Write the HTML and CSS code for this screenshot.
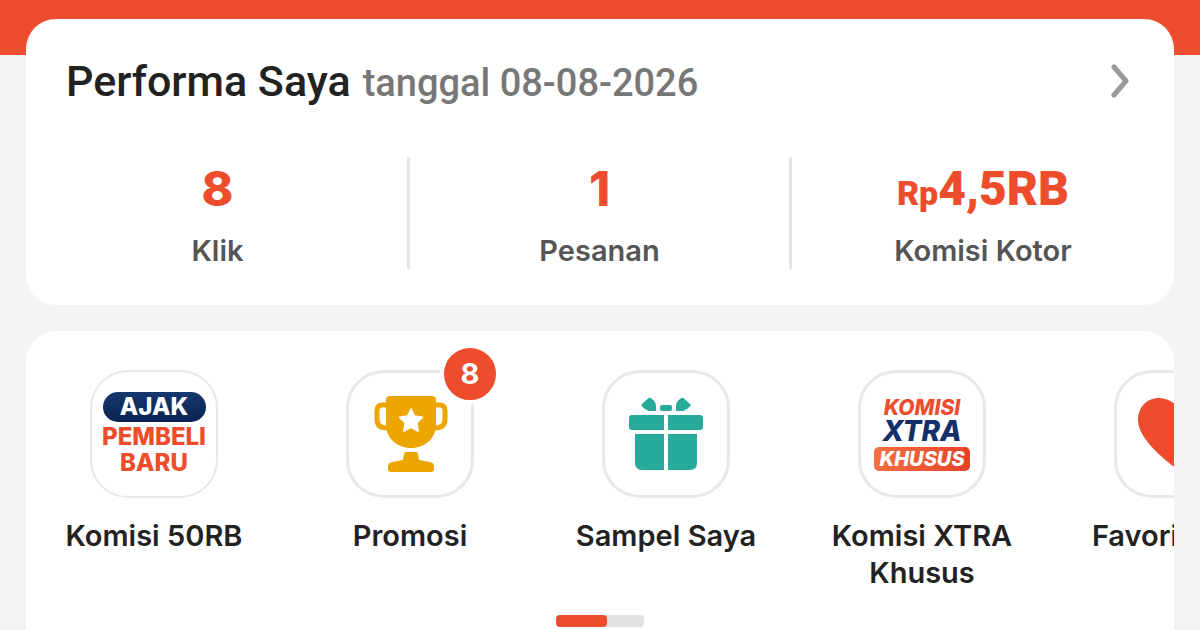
FILE: index.html
```
<!DOCTYPE html>
<html lang="id">
<head>
    <meta charset="UTF-8">
    <meta name="viewport" content="width=device-width, initial-scale=1">
    <title>Performa Saya</title>
    <link rel="stylesheet" href="styles.css">
</head>
<body>
    <main class="page">
        <!-- performance summary -->
        <section class="card performance">
            <a class="performance-head" href="#performa">
                <h1 class="title">Performa Saya</h1>
                <span class="date">tanggal 08-08-2026</span>
                <svg class="chevron" width="20" height="36" viewBox="0 0 20 36" aria-hidden="true">
                    <path d="M4 3 L16 17 L4 31" fill="none" stroke="#999" stroke-width="5" stroke-linecap="round" stroke-linejoin="round"/>
                </svg>
            </a>
            <div class="stats">
                <div class="stat">
                    <span class="value">8</span>
                    <span class="label">Klik</span>
                </div>
                <div class="stat">
                    <span class="value">1</span>
                    <span class="label">Pesanan</span>
                </div>
                <div class="stat">
                    <span class="value money"><span class="currency">Rp</span>4,5RB</span>
                    <span class="label">Komisi Kotor</span>
                </div>
            </div>
        </section>

        <!-- shortcut menu, scrolls sideways -->
        <section class="card shortcuts">
            <nav class="menu">
                <a class="item" href="#komisi">
                    <span class="tile tile-thin">
                        <span class="logo logo-ajak">
                            <span class="pill">AJAK</span>
                            <span>PEMBELI</span>
                            <span>BARU</span>
                        </span>
                    </span>
                    <span class="name">Komisi 50RB</span>
                </a>
                <a class="item" href="#promosi">
                    <span class="tile">
                        <svg width="76" height="80" viewBox="0 0 76 80" aria-hidden="true">
                            <path d="M15 11 H10 Q5 11 5 17 V25 Q5 34 15 34 M63 11 H68 Q73 11 73 17 V25 Q73 34 63 34" fill="none" stroke="#eda500" stroke-width="5"/>
                            <path d="M18 2 H60 Q64 2 64 6 V31 C64 44 53 54 39 54 C25 54 14 44 14 31 V6 Q14 2 18 2 Z" fill="#eda500"/>
                            <path d="M39 15 L42.500 22 L50.500 23.200 L44.800 29 L46.200 37.200 L39 33.300 L31.800 37.200 L33.200 29 L27.500 23.200 L35.500 22 Z" fill="#fff" stroke="#fff" stroke-width="1.500" stroke-linejoin="round"/>
                            <path d="M34 58 H44 Q46 58 46 60 L47 66 L58 68 Q62 69 62 72 V75 Q62 78 59 78 H19 Q16 78 16 75 V72 Q16 69 20 68 L31 66 L32 60 Q32 58 34 58 Z" fill="#eda500"/>
                        </svg>
                        <span class="badge">8</span>
                    </span>
                    <span class="name">Promosi</span>
                </a>
                <a class="item" href="#sampel">
                    <span class="tile">
                        <svg width="74" height="74" viewBox="0 0 74 74" fill="#27aa9a" aria-hidden="true">
                            <path d="M13 7 L19 1.500 Q21 0 23 2 Q27 5 27 9 V14 H20 Q15 12 12.500 9 Q12 8 13 7 Z"/>
                            <path d="M61 7 L55 1.500 Q53 0 51 2 Q47 5 47 9 V14 H54 Q59 12 61.500 9 Q62 8 61 7 Z"/>
                            <rect x="31" y="8" width="12" height="6" rx="2"/>
                            <path d="M3 18 H35 V33 H3 Q0 33 0 30 V21 Q0 18 3 18 Z"/>
                            <path d="M39 18 H71 Q74 18 74 21 V30 Q74 33 71 33 H39 Z"/>
                            <path d="M6 37 H35 V73 H13 Q6 73 6 66 Z"/>
                            <path d="M39 37 H68 V66 Q68 73 61 73 H39 Z"/>
                        </svg>
                    </span>
                    <span class="name">Sampel Saya</span>
                </a>
                <a class="item" href="#xtra">
                    <span class="tile">
                        <span class="logo logo-xtra">
                            <span>KOMISI</span>
                            <span class="xtra">XTRA</span>
                            <span class="khusus">KHUSUS</span>
                        </span>
                    </span>
                    <span class="name">Komisi XTRA Khusus</span>
                </a>
                <a class="item" href="#favorit">
                    <span class="tile">
                        <svg width="80" height="72" viewBox="0 0 80 72" aria-hidden="true">
                            <path d="M40 72 C30 64 0 42 0 22 C0 9 9 0 21 0 C29 0 36 4 40 10 C44 4 51 0 59 0 C71 0 80 9 80 22 C80 42 50 64 40 72 Z" fill="#ee4d2d"/>
                        </svg>
                    </span>
                    <span class="name">Favorit Saya</span>
                </a>
            </nav>
            <div class="indicator"><div class="indicator-thumb"></div></div>
        </section>
    </main>
</body>
</html>
```
FILE: styles.css
```
* {
    box-sizing: border-box;
}
body {
    margin: 0;
    font-family: Inter, Roboto, sans-serif;
    color: #222;
}
a {
    color: inherit;
    text-decoration: none;
}
.page {
    display: flex;
    flex-direction: column;
    gap: 26px;
    min-height: 100vh;
    padding: 19px 26px 0;
    background: linear-gradient(#ee4d2d 55px, #f4f4f4 55px);
}
.card {
    background: #fff;
    border-radius: 30px;
}

/* performance card */
.performance {
    padding: 36px 0;
}
.performance-head {
    display: flex;
    align-items: baseline;
    gap: 12px;
    padding: 0 44px 0 40px;
    font-family: Roboto, sans-serif;
    font-weight: 500;
    line-height: 52px;
}
.title {
    margin: 0;
    font-size: 43px;
    font-weight: 500;
}
.date {
    font-size: 38px;
    color: #777;
}
.chevron {
    align-self: center;
    margin-left: auto;
}
.stats {
    display: grid;
    grid-template-columns: repeat(3, 1fr);
    margin-top: 48px;
    padding-left: 2px;
}
.stat {
    display: flex;
    flex-direction: column;
    align-items: center;
    gap: 12px;
    height: 112px;
}
.stat:not(:last-child) {
    border-right: 3px solid #e5e5e5;
}
.value {
    height: 64px;
    font-size: 48px;
    font-weight: 800;
    line-height: 64px;
    color: #ee4d2d;
}
.money {
    font-family: Roboto, sans-serif;
    font-weight: 900;
}
.currency {
    font-size: 34px;
    line-height: 1;
}
.label {
    font-size: 29px;
    font-weight: 600;
    line-height: 36px;
    color: #555;
}

/* shortcuts card */
.shortcuts {
    flex: 1;
    padding-top: 39px;
    overflow: hidden;
    border-radius: 30px 30px 0 0;
}
.menu {
    display: flex;
}
.item {
    display: flex;
    flex: 0 0 256px;
    flex-direction: column;
    align-items: center;
    gap: 19px;
}
.tile {
    position: relative;
    display: flex;
    align-items: center;
    justify-content: center;
    width: 128px;
    height: 128px;
    border: 3px solid #e8e8e8;
    border-radius: 38px;
}
.tile-thin {
    border-width: 2px;
}
.name {
    max-width: 200px;
    font-size: 29px;
    font-weight: 600;
    line-height: 37px;
    text-align: center;
}
.badge {
    position: absolute;
    top: -29px;
    right: -29px;
    width: 60px;
    height: 60px;
    border: 4px solid #fff;
    border-radius: 50%;
    background: #ee4d2d;
    color: #fff;
    font-size: 29px;
    font-weight: 700;
    line-height: 52px;
    text-align: center;
}
.logo {
    display: flex;
    flex-direction: column;
    align-items: center;
    font-weight: 800;
    color: #ee4d2d;
}
.logo-ajak {
    font-size: 24px;
    line-height: 26px;
}
.pill {
    width: 103px;
    margin-bottom: 2px;
    border-radius: 15px;
    background: linear-gradient(#17386f, #082352);
    color: #fff;
    line-height: 30px;
    text-align: center;
}
.logo-xtra {
    font-size: 21px;
    font-style: italic;
    line-height: 22px;
}
.xtra {
    color: #14306b;
    font-size: 28px;
    line-height: 24px;
}
.khusus {
    width: 96px;
    margin-top: 4px;
    border-radius: 5px;
    background: linear-gradient(90deg, #f4703f, #e5432a);
    color: #fff;
    font-size: 20px;
    line-height: 24px;
    text-align: center;
}
.indicator {
    width: 88px;
    height: 12px;
    margin: 24px auto 0;
    border-radius: 4px;
    background: #e2e2e2;
}
.indicator-thumb {
    width: 58%;
    height: 100%;
    border-radius: 4px;
    background: #ee4d2d;
}
```
